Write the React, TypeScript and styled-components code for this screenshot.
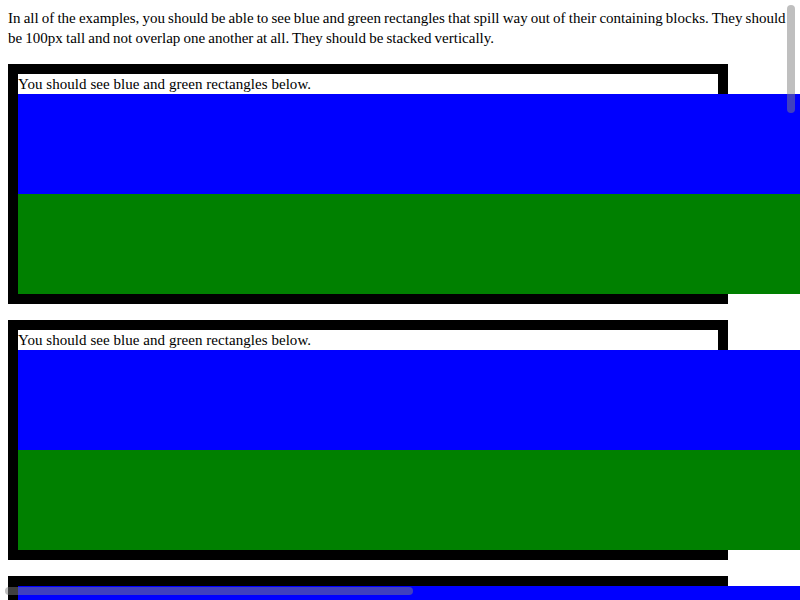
import React from "react";
import styled, { createGlobalStyle } from "styled-components";

const GlobalStyle = createGlobalStyle`
  html {
    overflow: hidden;
    scrollbar-width: none;
  }
  ::-webkit-scrollbar {
    width: 0;
    height: 0;
  }
  body {
    margin: 0;
    font-family: "Liberation Serif", "Times New Roman", serif;
    font-size: 15px;
    line-height: 20px;
    color: #000000;
    background: #ffffff;
  }
  #root {
    overflow: visible !important;
  }
`;

const Page = styled.div`
  padding: 8px;
`;

const Intro = styled.p`
  margin: 0 0 16px 0;
  word-spacing: -0.6px;
`;

// Each example: a thick black box whose coloured bars overflow to the right
const ExampleBox = styled.div`
  width: 700px;
  border: 10px solid #000000;
  margin-bottom: 16px;
  background: #ffffff;
`;

const Caption = styled.div`
  height: 20px;
  letter-spacing: 0.05px;
`;

const Bar = styled.div<{ color: string }>`
  width: 1530px;
  height: 100px;
  background: ${(props) => props.color};
`;

// overlay scrollbar thumbs, as the browser draws them over the page
const Thumb = styled.div<{ vertical?: boolean }>`
  position: fixed;
  background: rgba(128, 128, 128, 0.5);
  border-radius: 4px;
  ${(props) =>
    props.vertical
      ? "top: 5px; right: 5px; width: 8px; height: 108px;"
      : "left: 5px; bottom: 5px; width: 408px; height: 8px;"}
`;

export default function App() {
  return (
    <Page>
      <GlobalStyle />
      <Intro>
        In all of the examples, you should be able to see blue and green
        rectangles that spill way out of their containing blocks. They should
        be 100px tall and not overlap one another at all. They should be
        stacked vertically.
      </Intro>
      <ExampleBox>
        <Caption>You should see blue and green rectangles below.</Caption>
        <Bar color="blue" />
        <Bar color="green" />
      </ExampleBox>
      <ExampleBox>
        <Caption>You should see blue and green rectangles below.</Caption>
        <Bar color="blue" />
        <Bar color="green" />
      </ExampleBox>
      <ExampleBox>
        <Bar color="blue" />
        <Bar color="green" />
      </ExampleBox>
      <Thumb vertical />
      <Thumb />
    </Page>
  );
}
